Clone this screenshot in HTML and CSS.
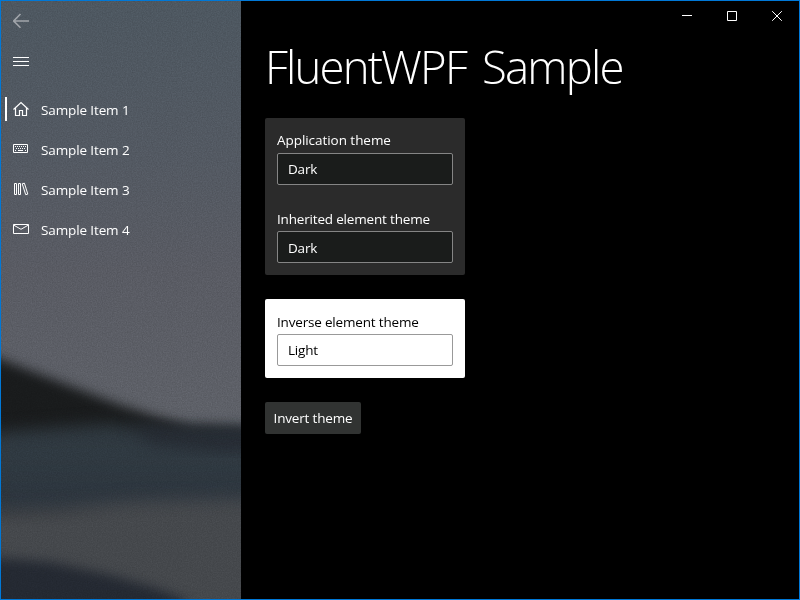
FILE: index.html
```html
<!DOCTYPE html>
<html lang="en">
<head>
<meta charset="utf-8">
<title>FluentWPF Sample</title>
<link rel="stylesheet" href="styles.css">
</head>
<body>
<div class="window">
  <aside class="sidebar">
    <svg class="acrylic" width="240" height="598" viewBox="1 1 240 598" aria-hidden="true">
      <defs>
        <linearGradient id="sky" x1="0" y1="0" x2="0" y2="1">
          <stop offset="0" stop-color="#4d5760"/>
          <stop offset=".35" stop-color="#535962"/>
          <stop offset=".6" stop-color="#595b63"/>
          <stop offset="1" stop-color="#5f6269"/>
        </linearGradient>
        <linearGradient id="water" x1="0" y1="0" x2="0" y2="1">
          <stop offset="0" stop-color="#2e373e"/>
          <stop offset=".3" stop-color="#2f3941"/>
          <stop offset="1" stop-color="#2b333c"/>
        </linearGradient>
        <filter id="soft" color-interpolation-filters="sRGB" x="-20%" y="-20%" width="140%" height="140%"><feGaussianBlur stdDeviation="6"/></filter>
        <filter id="softer" color-interpolation-filters="sRGB" x="-20%" y="-30%" width="140%" height="160%"><feGaussianBlur stdDeviation="8"/></filter>
        <filter id="grain" color-interpolation-filters="sRGB" x="0" y="0" width="100%" height="100%">
          <feTurbulence type="fractalNoise" baseFrequency=".8" numOctaves="2" seed="4"/>
          <feColorMatrix values="1 0 0 0 0  1 0 0 0 0  1 0 0 0 0  0 0 0 0 1"/>
        </filter>
      </defs>
      <rect width="242" height="450" fill="url(#sky)"/>
      <path filter="url(#soft)" fill="#191b1c" d="M-30 343L0 359L60 382L120 405L160 418L190 426L270 430V450H-30Z"/>
      <path filter="url(#softer)" fill="url(#water)" d="M-30 434L0 432L60 427L110 424L160 430L270 430V520H-30Z"/>
      <path filter="url(#softer)" fill="#242931" d="M130 424L190 431L270 432V450L210 450L150 442Z"/>
      <path filter="url(#softer)" fill="#45484c" d="M-30 511L60 508L130 501L270 498V640H-30Z"/>
      <path filter="url(#soft)" fill="#242932" d="M-30 556L0 558L50 562L110 575L155 588L185 600L190 640H-30Z"/>
      <rect class="grain" width="242" height="600" filter="url(#grain)"/>
    </svg>
    <button class="icon-button back" aria-label="Back">
      <svg width="16" height="16" viewBox="0 0 16 16"><path d="M.7 8H16M7.500 1L.7 8l6.800 6.800"/></svg>
    </button>
    <button class="icon-button menu" aria-label="Menu">
      <svg width="16" height="16" viewBox="0 0 16 16"><path d="M0 4.500h16M0 8.500h16M0 12.500h16"/></svg>
    </button>
    <nav class="nav">
      <a class="item selected">
        <svg width="16" height="16" viewBox="0 0 16 16"><path d="M.5 8.500L8 1.500l7.500 7M2.500 7v7.500h4v-5h3v5h4V7" stroke-width="1.200"/></svg>
        <span>Sample Item 1</span>
      </a>
      <a class="item">
        <svg width="16" height="16" viewBox="0 0 16 16"><path d="M.5 3.500h14v8h-14z"/><path d="M2 5.500h11M3 7.500h10" stroke-dasharray="1 1"/><path d="M2 9.500h1M5 9.500h5M12 9.500h1"/></svg>
        <span>Sample Item 2</span>
      </a>
      <a class="item">
        <svg width="16" height="16" viewBox="0 0 16 16"><path d="M1.500 2.500h2v11h-2zM5.500 2.500h2v11h-2zM9.200 2.800l2.200-.6 3.400 10.900-2.100.6z"/></svg>
        <span>Sample Item 3</span>
      </a>
      <a class="item">
        <svg width="16" height="16" viewBox="0 0 16 16"><path d="M.5 3.500h15v9H.5zM.5 4L8 8.300 15.500 4"/></svg>
        <span>Sample Item 4</span>
      </a>
    </nav>
  </aside>
  <main class="main">
    <div class="caption">
      <button aria-label="Minimize"><svg width="10" height="10" viewBox="0 0 10 10"><path d="M0 4.500h10"/></svg></button>
      <button aria-label="Maximize"><svg width="10" height="10" viewBox="0 0 10 10"><path d="M.5.5h9v9h-9z"/></svg></button>
      <button aria-label="Close"><svg width="10" height="10" viewBox="0 0 10 10"><path d="M.2.2l9.600 9.600M9.800.2L.2 9.800"/></svg></button>
    </div>
    <h1 class="title">FluentWPF Sample</h1>
    <section class="card dark">
      <div class="label application">Application theme</div>
      <div class="field">Dark</div>
      <div class="label second">Inherited element theme</div>
      <div class="field low">Dark</div>
    </section>
    <section class="card light">
      <div class="label">Inverse element theme</div>
      <div class="field">Light</div>
    </section>
    <button class="invert">Invert theme</button>
  </main>
</div>
</body>
</html>
```
FILE: styles.css
```css
* { box-sizing: border-box; }
body {
  margin: 0;
  background: #000;
  color: #fff;
  font: 13.5px/20px "Open Sans", "Noto Sans", sans-serif;
  letter-spacing: -.18px;
}
button {
  margin: 0;
  padding: 0;
  border: 0;
  background: none;
  color: inherit;
  font: inherit;
  letter-spacing: inherit;
}
svg { display: block; flex: none; }
.window {
  display: grid;
  grid-template-columns: 240px 1fr;
  width: 800px;
  height: 600px;
  border: 1px solid #0078d7;
  overflow: hidden;
}
.sidebar {
  position: relative;
  height: 598px;
  overflow: hidden;
}
.acrylic { position: absolute; inset: 0; }
.grain { opacity: .12; mix-blend-mode: overlay; }
.icon-button, .nav { position: relative; }
.icon-button {
  display: flex;
  align-items: center;
  width: 40px;
  height: 40px;
  padding-left: 12px;
}
.icon-button svg, .item svg, .caption svg {
  fill: none;
  stroke: #fff;
  stroke-width: 1;
}
.icon-button.back svg { stroke: #a1a5aa; stroke-width: 1.6; }
.nav { padding-top: 9px; }
.item {
  position: relative;
  display: flex;
  align-items: center;
  gap: 12px;
  height: 40px;
  padding-left: 12px;
  letter-spacing: -.12px;
}
.item svg { margin-top: -2px; }
.item.selected::before {
  content: "";
  position: absolute;
  left: 4px;
  top: 7px;
  width: 2px;
  height: 24px;
  background: #fff;
}
.main { background: #000; padding-left: 24px; }
.caption {
  display: flex;
  justify-content: flex-end;
  height: 30px;
}
.caption button {
  display: flex;
  align-items: center;
  justify-content: center;
  width: 45px;
  height: 30px;
}
.title {
  height: 87px;
  margin: 0;
  font-size: 45.5px;
  line-height: 71px;
  font-weight: 300;
  letter-spacing: -1.8px;
  word-spacing: 6px;
  white-space: nowrap;
}
.card {
  width: 200px;
  padding: 13px 12px 12px;
  border-radius: 2px;
}
.card.dark { background: #2b2b2b; }
.card.light { margin-top: 24px; background: #fff; color: #000; }
.label { height: 22px; line-height: 20px; white-space: nowrap; }
.label.application { letter-spacing: -.05px; line-height: 18px; }
.label.second { margin-top: 24px; }
.field {
  height: 32px;
  padding-left: 10px;
  border: 1px solid #858585;
  border-radius: 2px;
  line-height: 30px;
}
.field.low { line-height: 32px; }
.dark .field { background: #1a1c1b; }
.light .field { border-color: #999; }
.invert {
  display: block;
  width: 96px;
  height: 32px;
  margin-top: 24px;
  border-radius: 2px;
  background: #313332;
  white-space: nowrap;
}
```
